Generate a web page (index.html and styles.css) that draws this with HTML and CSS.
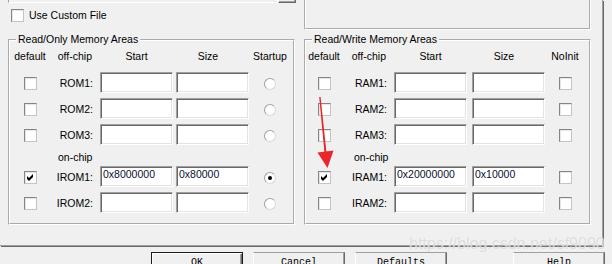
FILE: index.html
```html
<!DOCTYPE html>
<html>
<head>
<meta charset="utf-8">
<link rel="stylesheet" href="styles.css">
</head>
<body>
<div class="dialog">
  <div class="tabpage">
    <div class="top">
      <div class="top-left">
        <div class="file-strip"><span class="file-field"></span><span class="file-btn"></span></div>
        <div class="custom"><span class="cb"></span><span>Use Custom File</span></div>
      </div>
      <div class="top-group"></div>
    </div>
    <div class="groups">
      <fieldset class="group ro">
        <legend>Read/Only Memory Areas</legend>
        <div class="grid">
          <span class="h h-def">default</span><span class="h h-off">off-chip</span><span class="h h-start">Start</span><span class="h h-size">Size</span><span class="h h-last">Startup</span>

          <span class="cb c-def"></span><span class="lbl">ROM1:</span><span class="fld"></span><span class="fld"></span><span class="radio c-last"></span>
          <span class="cb c-def"></span><span class="lbl">ROM2:</span><span class="fld"></span><span class="fld"></span><span class="radio c-last"></span>
          <span class="cb c-def"></span><span class="lbl">ROM3:</span><span class="fld"></span><span class="fld"></span><span class="radio c-last"></span>
          <span class="onchip">on-chip</span>
          <span class="cb c-def"><svg class="tick" viewBox="0 0 11 11"><path d="M2 4 L4 6 L8 2 L8 5 L4 9 L2 7 Z"/></svg></span><span class="lbl">IROM1:</span><span class="fld">0x8000000</span><span class="fld">0x80000</span><span class="radio c-last on"></span>
          <span class="cb c-def"></span><span class="lbl">IROM2:</span><span class="fld"></span><span class="fld"></span><span class="radio c-last"></span>
        </div>
      </fieldset>
      <fieldset class="group rw">
        <legend>Read/Write Memory Areas</legend>
        <div class="grid">
          <span class="h h-def">default</span><span class="h h-off">off-chip</span><span class="h h-start">Start</span><span class="h h-size">Size</span><span class="h h-last">NoInit</span>

          <span class="cb c-def"></span><span class="lbl">RAM1:</span><span class="fld"></span><span class="fld"></span><span class="cb c-last"></span>
          <span class="cb c-def"></span><span class="lbl">RAM2:</span><span class="fld"></span><span class="fld"></span><span class="cb c-last"></span>
          <span class="cb c-def"></span><span class="lbl">RAM3:</span><span class="fld"></span><span class="fld"></span><span class="cb c-last"></span>
          <span class="onchip">on-chip</span>
          <span class="cb c-def"><svg class="tick" viewBox="0 0 11 11"><path d="M2 4 L4 6 L8 2 L8 5 L4 9 L2 7 Z"/></svg></span><span class="lbl">IRAM1:</span><span class="fld">0x20000000</span><span class="fld">0x10000</span><span class="cb c-last"></span>
          <span class="cb c-def"></span><span class="lbl">IRAM2:</span><span class="fld"></span><span class="fld"></span><span class="cb c-last"></span>
        </div>
      </fieldset>
    </div>
  </div>
  <div class="buttons">
    <div class="btn default">OK</div>
    <div class="btn">Cancel</div>
    <div class="btn">Defaults</div>
    <div class="btn help">Help</div>
  </div>
  <div class="watermark">https://blog.csdn.net/sf9090</div>
  <svg class="arrow" viewBox="0 0 612 264" width="612" height="264">
    <path d="M319.2 97 L320.6 97 L326.4 152 L324.4 152 Z" fill="#e8262b"/>
    <path d="M317.5 152.5 L333.5 150.5 L327.5 168 Z" fill="#e8262b"/>
  </svg>
</div>
</body>
</html>
```

FILE: styles.css
```css
* { box-sizing: border-box; }

html, body {
  margin: 0;
  padding: 0;
  background: #f0f0f0;
  overflow: hidden;
}

body {
  font-family: "Liberation Sans", Arial, sans-serif;
  font-size: 10.5px;
  color: #000;
}

.dialog {
  position: relative;
  width: 612px;
  height: 264px;
  overflow: hidden;
}

.tabpage {
  width: 603px;
  height: 246px;
  border-right: 1px solid #a0a0a0;
  border-bottom: 1px solid #a0a0a0;
  box-shadow: 1px 1px 0 #696969;
}

/* top area */
.top {
  display: flex;
  height: 33px;
}

.top-left {
  width: 304px;
}

.file-strip {
  display: flex;
  height: 3px;
  padding-left: 8px;
}

.file-field {
  width: 270px;
  background: #f0f0f0;
  border-left: 1px solid #a0a0a0;
  border-right: 1px solid #fff;
  border-bottom: 1px solid #fff;
}

.file-btn {
  width: 18px;
  background: #f0f0f0;
  border-left: 1px solid #fff;
  border-right: 1px solid #696969;
  border-bottom: 1px solid #696969;
  box-shadow: inset -1px -1px 0 #a0a0a0;
}

.custom {
  display: flex;
  align-items: center;
  gap: 5px;
  height: 13px;
  line-height: 13px;
  margin: 6px 0 0 11px;
  white-space: nowrap;
}

.top-group {
  width: 287px;
  height: 30px;
  border: 2px groove #fff;
  border-top: 0;
}

/* group boxes */
.groups {
  display: flex;
  gap: 9px;
  padding-left: 8px;
}

.group {
  width: 287px;
  margin: 0;
  padding: 4px 0 10px;
  border: 2px groove #fff;
  min-inline-size: 0;
}

.group legend {
  padding: 0 2px;
  margin-left: 6px;
  line-height: 13px;
  white-space: nowrap;
}

.grid {
  display: grid;
  grid-template-rows: 22px 26px 26px 26px 16px 26px 21px;
  align-items: start;
}

.ro .grid { grid-template-columns: 40px 50px 76px 73px 42px; }
.rw .grid { grid-template-columns: 36px 52px 78px 73px 40px; }

.h {
  line-height: 12px;
  white-space: nowrap;
}

.h-def, .h-last { justify-self: center; }
.h-off { justify-self: end; margin-right: 8px; }
.h-start { width: 73px; text-align: center; }
.h-size { width: 73px; text-align: center; padding-right: 9px; }

.lbl {
  justify-self: end;
  margin-right: 7px;
  padding-top: 1px;
  line-height: 21px;
  white-space: nowrap;
}

.fld {
  width: 73px;
  height: 21px;
  background: #fff;
  border: 1px solid;
  border-color: #a0a0a0 #fff #fff #a0a0a0;
  box-shadow: inset 1px 1px 0 #696969, inset -1px -1px 0 #e3e3e3;
  padding: 1px 0 0 2px;
  line-height: 12px;
  color: #0a1030;
  white-space: nowrap;
}

.onchip {
  grid-column: 1 / -1;
  padding: 1px 0 0 48px;
  line-height: 12px;
}

/* checkbox */
.cb {
  display: inline-block;
  width: 13px;
  height: 13px;
  flex: none;
  background: #fff;
  border: 1px solid;
  border-color: #858585 #c4c4c4 #c4c4c4 #858585;
  box-shadow: inset 1px 1px 0 #e6e6e6;
}

.c-def, .c-last {
  justify-self: center;
  margin-top: 5px;
}

.tick {
  display: block;
  width: 11px;
  height: 11px;
}

.tick path { fill: #000; }

/* radio */
.radio {
  position: relative;
  width: 12px;
  height: 12px;
  margin-top: 6px;
  border-radius: 50%;
  background: #fff;
  border: 1px solid;
  border-color: #a0a0a0 #d8d8d8 #d8d8d8 #a0a0a0;
}

.radio.on::after {
  content: "";
  position: absolute;
  left: 3px;
  top: 3px;
  width: 4px;
  height: 4px;
  border-radius: 50%;
  background: #000;
}

/* buttons */
.buttons {
  display: flex;
  gap: 10px;
  width: 605px;
  padding-left: 151px;
  margin-top: 6px;
}

.btn {
  width: 92px;
  height: 23px;
  flex: none;
  padding-top: 4px;
  font-family: "Liberation Mono", "DejaVu Sans Mono", monospace;
  font-size: 10px;
  line-height: 12px;
  text-align: center;
  background: #f0f0f0;
  border: 1px solid;
  border-color: #a0a0a0 #696969 #696969 #fff;
  box-shadow: inset -1px -1px 0 #a0a0a0;
}

.btn.default {
  border-color: #1a1a1a;
  box-shadow: inset 1px 1px 0 #fff, inset -1px -1px 0 #696969, inset -2px -2px 0 #a0a0a0;
}

.btn.help { margin-left: auto; }

/* overlays */
.watermark {
  position: absolute;
  left: 409px;
  top: 236px;
  font-size: 16px;
  line-height: 16px;
  white-space: nowrap;
  color: rgba(200, 200, 200, 0.6);
  text-shadow: 0 0 1px rgba(255, 255, 255, 0.9);
}

.arrow {
  position: absolute;
  left: 0;
  top: 0;
  pointer-events: none;
}
```
